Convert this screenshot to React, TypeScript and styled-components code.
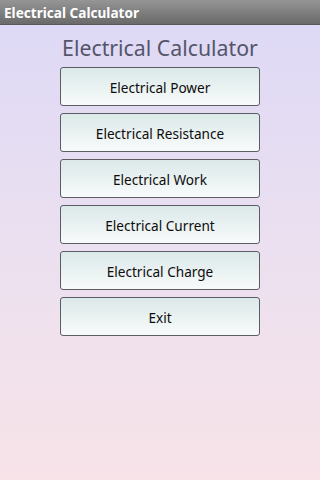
import { styled, createGlobalStyle } from "styled-components";

const GlobalStyle = createGlobalStyle`
  html, body {
    margin: 0;
    padding: 0;
  }
  body {
    font-family: "Noto Sans", "Open Sans", "DejaVu Sans", sans-serif;
  }
`;

const Screen = styled.div`
  width: 320px;
  height: 480px;
  display: flex;
  flex-direction: column;
  background: linear-gradient(to bottom, #dcd8f6 0%, #ebe0f0 50%, #f7e3e8 100%);
  overflow: hidden;
`;

const TitleBar = styled.div`
  height: 25px;
  display: flex;
  align-items: center;
  padding-left: 4px;
  background: linear-gradient(to bottom, #959595 0%, #7b7b7b 60%, #6a6a6a 100%);
  border-bottom: 1px solid #5a5a5a;
  box-sizing: border-box;
`;

const TitleText = styled.span`
  color: #ffffff;
  font-weight: 700;
  font-size: 13.6px;
`;

const Content = styled.div`
  display: flex;
  flex-direction: column;
  align-items: center;
  padding-top: 8px;
`;

const Heading = styled.h1`
  margin: 0 0 4px;
  font-size: 21.3px;
  font-weight: 400;
  color: #55556a;
  line-height: 30px;
`;

const Menu = styled.div`
  display: flex;
  flex-direction: column;
  gap: 7px;
`;

const MenuButton = styled.button`
  width: 200px;
  height: 39px;
  border: 1.5px solid #5c5c64;
  border-radius: 3px;
  background: linear-gradient(to bottom, #dce9e9 0%, #ecf3f3 60%, #f9fbfb 100%);
  color: #0d0d0d;
  font-family: inherit;
  font-size: 13.6px;
  padding: 2px 0 0;
  cursor: pointer;
`;

const items = [
  "Electrical Power",
  "Electrical Resistance",
  "Electrical Work",
  "Electrical Current",
  "Electrical Charge",
  "Exit",
];

export default function App() {
  return (
    <>
      <GlobalStyle />
      <Screen>
        <TitleBar>
          <TitleText>Electrical Calculator</TitleText>
        </TitleBar>
        <Content>
          <Heading>Electrical Calculator</Heading>
          <Menu>
            {items.map((label) => (
              <MenuButton key={label}>{label}</MenuButton>
            ))}
          </Menu>
        </Content>
      </Screen>
    </>
  );
}
